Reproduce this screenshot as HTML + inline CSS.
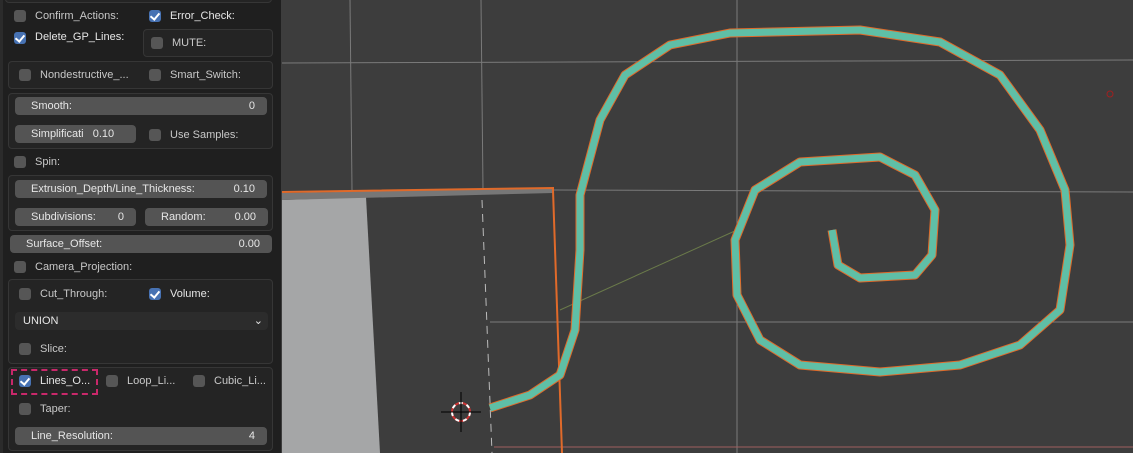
<!DOCTYPE html>
<html><head><style>
*{box-sizing:border-box;margin:0;padding:0}
body{width:1133px;height:453px;overflow:hidden;background:#3d3d3d;font-family:"Liberation Sans","DejaVu Sans",sans-serif;font-size:11px;color:#c8c8c8;position:relative}
#panel{position:absolute;left:0;top:0;width:281px;height:453px;background:#1f1f1f;box-shadow:inset 3px 0 0 #2b2b2b}
.box{position:absolute;background:#242424;border:1px solid #363636;border-radius:4px}
.cb{position:absolute;width:12px;height:12px;border-radius:3px;background:#565656}
.cb.on{background:#4772b3}
.cb.on::after{content:"";position:absolute;left:3px;top:1px;width:4px;height:7px;border:solid #fff;border-width:0 2px 2px 0;transform:rotate(40deg)}
.t{position:absolute;white-space:nowrap;line-height:14px}
.w{color:#e6e6e6}
.sl{position:absolute;height:18px;background:#545454;border-radius:4px;color:#e6e6e6;line-height:18px;padding:0 10px 0 16px}
.sl span{position:absolute;right:12px}
</style></head><body>
<svg width="1133" height="453" style="position:absolute;left:0;top:0">
<g stroke="#7a7a7a" stroke-width="1" fill="none">
<line x1="350" y1="0" x2="352" y2="190"/>
<line x1="481" y1="0" x2="483" y2="190"/>
<line x1="737" y1="0" x2="737" y2="453"/>
<line x1="282" y1="63" x2="1133" y2="60"/>
<line x1="490" y1="322" x2="1133" y2="322"/>
<line x1="553" y1="190" x2="1133" y2="192"/>
<line x1="494" y1="447" x2="1133" y2="447" stroke="#a06060"/>
</g>
<line x1="560" y1="310" x2="737" y2="230" stroke="#6a7a4a" stroke-width="1"/>
<polygon points="282,200 366,197 380,453 282,453" fill="#a5a6a7"/>
<polygon points="282,193 553,188 553,193 282,200" fill="#777"/>
<polyline points="282,192 553,188 553,190 562,453" stroke="#e06a2a" stroke-width="2" fill="none"/>
<line x1="482" y1="200" x2="492" y2="453" stroke="#bbb" stroke-dasharray="8,6"/>
<polyline fill="none" stroke="#e06a2a" stroke-width="9" stroke-linejoin="round" points="490,408 530,395 560,375 575,330 580,250 580,195 600,120 625,75 670,45 730,33 860,30 940,42 1000,75 1040,130 1065,190 1070,245 1060,310 1020,345 960,365 880,372 800,365 760,340 737,295 735,240 755,190 800,162 880,157 915,175 935,210 932,255 915,275 860,278 838,265 832,230"/>
<polyline fill="none" stroke="#5fbfa6" stroke-width="7" stroke-linejoin="round" points="490,408 530,395 560,375 575,330 580,250 580,195 600,120 625,75 670,45 730,33 860,30 940,42 1000,75 1040,130 1065,190 1070,245 1060,310 1020,345 960,365 880,372 800,365 760,340 737,295 735,240 755,190 800,162 880,157 915,175 935,210 932,255 915,275 860,278 838,265 832,230"/>
<circle cx="461" cy="412" r="9" fill="none" stroke="#c33" stroke-width="2"/>
<circle cx="461" cy="412" r="9" fill="none" stroke="#fff" stroke-width="2" stroke-dasharray="4,4"/>
<g stroke="#000"><line x1="461" y1="392" x2="461" y2="432"/><line x1="441" y1="412" x2="481" y2="412"/></g>
<circle cx="1110" cy="94" r="3" fill="none" stroke="#a02020"/>
</svg>
<div id="panel">
<div class="box" style="left:5px;top:-5px;width:267px;height:8px"></div>
<div class="cb" style="left:14px;top:10px"></div><div class="t" style="left:35px;top:9px">Confirm_Actions:</div>
<div class="cb on" style="left:149px;top:10px"></div><div class="t w" style="left:170px;top:9px">Error_Check:</div>
<div class="cb on" style="left:14px;top:32px"></div><div class="t w" style="left:35px;top:30px">Delete_GP_Lines:</div>
<div class="box" style="left:143px;top:29px;width:130px;height:28px"></div>
<div class="cb" style="left:151px;top:37px"></div><div class="t" style="left:172px;top:36px">MUTE:</div>
<div class="box" style="left:8px;top:61px;width:265px;height:28px"></div>
<div class="cb" style="left:19px;top:69px"></div><div class="t" style="left:40px;top:68px">Nondestructive_...</div>
<div class="cb" style="left:149px;top:69px"></div><div class="t" style="left:170px;top:68px">Smart_Switch:</div>
<div class="box" style="left:8px;top:93px;width:265px;height:56px"></div>
<div class="sl" style="left:15px;top:97px;width:252px">Smooth:<span>0</span></div>
<div class="sl" style="left:15px;top:125px;width:121px">Simplificati&nbsp;&nbsp;&nbsp;0.10</div>
<div class="cb" style="left:149px;top:129px"></div><div class="t" style="left:170px;top:128px">Use Samples:</div>
<div class="cb" style="left:14px;top:156px"></div><div class="t" style="left:35px;top:155px">Spin:</div>
<div class="box" style="left:8px;top:175px;width:265px;height:56px"></div>
<div class="sl" style="left:15px;top:180px;width:252px">Extrusion_Depth/Line_Thickness:<span>0.10</span></div>
<div class="sl" style="left:15px;top:208px;width:121px">Subdivisions:<span>0</span></div>
<div class="sl" style="left:145px;top:208px;width:123px;padding-left:16px">Random:<span>0.00</span></div>
<div class="sl" style="left:10px;top:235px;width:262px">Surface_Offset:<span>0.00</span></div>
<div class="cb" style="left:14px;top:261px"></div><div class="t" style="left:35px;top:260px">Camera_Projection:</div>
<div class="box" style="left:8px;top:279px;width:265px;height:85px"></div>
<div class="cb" style="left:19px;top:288px"></div><div class="t" style="left:40px;top:287px">Cut_Through:</div>
<div class="cb on" style="left:149px;top:288px"></div><div class="t w" style="left:170px;top:287px">Volume:</div>
<div class="sl" style="left:15px;top:312px;width:253px;background:#2c2c2c;padding-left:8px">UNION<span style="right:5px">&#8964;</span></div>
<div class="cb" style="left:19px;top:343px"></div><div class="t" style="left:40px;top:342px">Slice:</div>
<div class="box" style="left:8px;top:367px;width:265px;height:84px"></div>
<div style="position:absolute;left:11px;top:369px;width:87px;height:26px;border:2px dashed #c8286a"></div>
<div class="cb on" style="left:19px;top:375px"></div><div class="t w" style="left:40px;top:374px">Lines_O...</div>
<div class="cb" style="left:106px;top:375px"></div><div class="t" style="left:127px;top:374px">Loop_Li...</div>
<div class="cb" style="left:193px;top:375px"></div><div class="t" style="left:214px;top:374px">Cubic_Li...</div>
<div class="cb" style="left:19px;top:403px"></div><div class="t" style="left:40px;top:402px">Taper:</div>
<div class="sl" style="left:15px;top:427px;width:252px">Line_Resolution:<span>4</span></div>
</div>
</body></html>
